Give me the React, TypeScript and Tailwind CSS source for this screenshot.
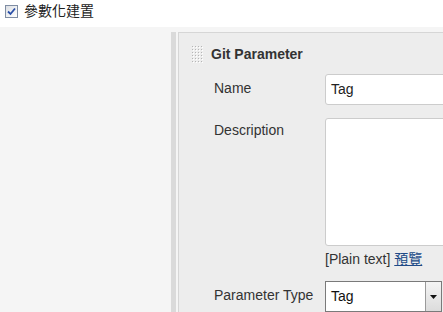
import React from 'react';

function Grip() {
  const dots = [];
  for (let r = 0; r < 6; r++) {
    for (let c = 0; c < 4; c++) {
      dots.push(<rect key={`${r}-${c}`} x={c * 3} y={r * 3} width="1" height="1" fill="#b5b5b5" />);
      dots.push(<rect key={`h${r}-${c}`} x={c * 3 + 1} y={r * 3 + 1} width="1" height="1" fill="#ffffff" />);
    }
  }
  return (
    <svg width="11" height="17" viewBox="0 0 11 17" className="shrink-0">
      {dots}
    </svg>
  );
}

function CheckBox() {
  return (
    <div className="w-[13px] h-[13px] border border-[#7f8da3] bg-gradient-to-br from-[#dcdfe4] to-[#ffffff] flex items-center justify-center">
      <svg width="9" height="9" viewBox="0 0 9 9">
        <path d="M1 4.5 L3.5 7 L8 1.5" fill="none" stroke="#2a4fa8" strokeWidth="1.8" />
      </svg>
    </div>
  );
}

export default function App() {
  return (
    <div className="w-[443px] h-[312px] overflow-hidden bg-[#f5f5f5] font-['Liberation_Sans','Noto_Sans_CJK_TC',Arial,sans-serif] text-[14px] text-[#333]">
      <div className="h-[27px] bg-white flex items-center pl-[5px] gap-[6px] pb-[5px]">
        <CheckBox />
        <span className="text-[14px] text-[#222] leading-none">參數化建置</span>
      </div>

      <div className="flex pt-[5px]">
        <div className="w-[171px] shrink-0" />
        <div className="w-[5px] shrink-0 bg-[#dadada]" />
        <div className="ml-[2px] w-[400px] shrink-0 bg-[#ededed] border-t border-l border-[#d6d6d6] pl-[13px] pt-[13px] pb-[20px]">
          <div className="flex items-center gap-[8px] h-[17px]">
            <Grip />
            <span className="font-bold text-[14px] text-[#333]">Git Parameter</span>
          </div>

          <div className="pl-[22px] mt-[11px] grid grid-cols-[111px_1fr] gap-y-[13px]">
            <div className="pt-[6px] leading-[16px]">Name</div>
            <div className="h-[31px] w-[240px] bg-white border border-[#cccccc] rounded-[3px] flex items-center px-[5px] text-[14px] text-[#222]">
              Tag
            </div>

            <div className="pt-[4px] leading-[16px]">Description</div>
            <div>
              <div className="h-[128px] w-[240px] bg-white border border-[#cccccc] rounded-[3px]" />
              <div className="mt-[4px] leading-[18px] text-[14px] text-[#333]">
                [Plain text] <span className="text-[#204a87] underline">預覽</span>
              </div>
            </div>

            <div className="pt-[6px] leading-[16px]">Parameter Type</div>
            <div className="h-[31px] w-[117px] bg-white border border-[#7a7a7a] flex items-center">
              <span className="flex-1 px-[5px] text-[14px] text-[#111]">Tag</span>
              <div className="w-[16px] h-full border-l border-[#9a9a9a] bg-gradient-to-b from-[#f4f4f4] to-[#dcdcdc] flex items-center justify-center">
                <svg width="7" height="4" viewBox="0 0 7 4">
                  <path d="M0 0 H7 L3.5 4 Z" fill="#111" />
                </svg>
              </div>
            </div>
          </div>
        </div>
      </div>
    </div>
  );
}
